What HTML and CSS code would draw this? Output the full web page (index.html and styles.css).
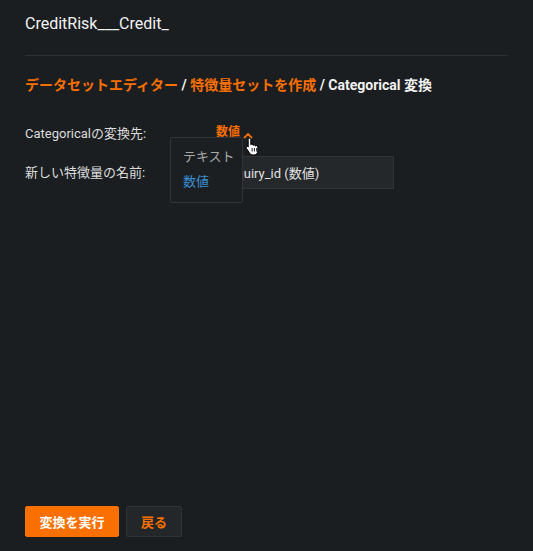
FILE: index.html
```html
<!DOCTYPE html>
<html lang="ja">
<head>
<meta charset="utf-8">
<link rel="stylesheet" href="styles.css">
</head>
<body>
<div class="page">
  <header class="header">
    <h1 class="title">CreditRisk___Credit_</h1>
  </header>
  <nav class="crumbs">
    <span class="crumb-link">データセットエディター</span><span class="sep"> / </span><span class="crumb-link">特徴量セットを作成</span><span class="sep"> / </span><span class="crumb-current">Categorical 変換</span>
  </nav>
  <form class="form">
    <div class="row">
      <label class="label">Categoricalの変換先:</label>
      <div class="field field-select">
        <span class="select-value">数値</span>
        <svg class="caret" width="10" height="7" viewBox="0 0 10 7"><path d="M1 6 L5 2 L9 6" fill="none" stroke="#f96f00" stroke-width="1.8"/></svg>
        <svg class="hand" width="15" height="19" viewBox="0 0 15 19"><path d="M4.5 1.2c.8 0 1.3.6 1.3 1.4v5.2c.3-.5.8-.7 1.3-.6.6.1 1 .6 1 1.2.3-.4.8-.6 1.3-.5.6.1 1 .6 1 1.2.3-.3.8-.5 1.3-.4.7.2 1.1.8 1.1 1.5v3.6c0 2.2-1.6 4.200-3.8 4.2H8c-1.4 0-2.5-.6-3.300-1.7L1.5 11.6c-.5-.7-.3-1.5.3-1.9.6-.4 1.4-.2 1.8.4l-.4-.6V2.6c0-.8.5-1.4 1.3-1.4z" fill="#fff" stroke="#000" stroke-width="1"/><path d="M7.1 11v3.5M9.4 11v3.5M11.7 11v3.5" stroke="#000" stroke-width=".9"/></svg>
        <ul class="menu">
          <li class="menu-item">テキスト</li>
          <li class="menu-item menu-item-active">数値</li>
        </ul>
      </div>
    </div>
    <div class="row">
      <label class="label">新しい特徴量の名前:</label>
      <div class="field">
        <div class="input">inquiry_id (数値)</div>
      </div>
    </div>
  </form>
  <div class="actions">
    <button class="btn btn-primary" type="button">変換を実行</button>
    <button class="btn btn-secondary" type="button">戻る</button>
  </div>
</div>
</body>
</html>
```

FILE: styles.css
```css
* { box-sizing: border-box; }
html, body {
  margin: 0;
  padding: 0;
  background: #1b1e21;
}
body {
  font-family: Roboto, "Noto Sans CJK JP", sans-serif;
  color: #e6e6e6;
}
.page {
  height: 551px;
  padding: 0 25px 14px;
  display: flex;
  flex-direction: column;
}
.header {
  padding-top: 14px;
  padding-bottom: 21px;
  border-bottom: 1px solid #2e3134;
}
.title {
  margin: 0;
  font-size: 16px;
  line-height: 20px;
  font-weight: 400;
  color: #f2f2f2;
}
.crumbs {
  margin-top: 19px;
  font-size: 14px;
  line-height: 20px;
  font-weight: 700;
  color: #f2f2f2;
}
.crumb-link { color: #f96f00; }
.form {
  margin-top: 30px;
  display: flex;
  flex-direction: column;
  gap: 13px;
}
.row {
  display: grid;
  grid-template-columns: 190px 179px;
  align-items: center;
}
.label {
  font-size: 13px;
  line-height: 18px;
  color: #dcdcdc;
}
.field { position: relative; }
.field-select {
  display: flex;
  align-items: center;
  height: 18px;
}
.select-value {
  margin-left: 1px;
  font-size: 12px;
  font-weight: 700;
  color: #f96f00;
  line-height: 14px;
  position: relative;
  top: -2px;
}
.caret {
  margin-left: 3px;
  position: relative;
  top: 1px;
}
.hand {
  position: absolute;
  left: 30px;
  top: 12px;
  z-index: 3;
}
.menu {
  position: absolute;
  left: -45px;
  top: 12px;
  width: 73px;
  height: 66px;
  margin: 0;
  padding: 6px 0 0 12px;
  list-style: none;
  background: #1c1f22;
  border: 1px solid #303337;
  border-radius: 2px;
  z-index: 2;
}
.menu-item {
  font-size: 13px;
  line-height: 25px;
  color: #a9a9a9;
}
.menu-item-active { color: #3a8fd4; }
.input {
  height: 33px;
  padding: 0 10px;
  display: flex;
  align-items: center;
  background: #25282b;
  border: 1px solid #303337;
  font-size: 13px;
  color: #e0e0e0;
  white-space: nowrap;
  overflow: hidden;
}
.actions {
  margin-top: auto;
  display: flex;
  gap: 7px;
}
.btn {
  height: 31px;
  border-radius: 2px;
  font-family: Roboto, "Noto Sans CJK JP", sans-serif;
  font-size: 13px;
  font-weight: 700;
  padding: 0;
  cursor: pointer;
}
.btn-primary {
  width: 94px;
  background: #f96f00;
  border: 1px solid #f96f00;
  color: #fff;
}
.btn-secondary {
  width: 56px;
  background: #24272a;
  border: 1px solid #303337;
  color: #f96f00;
}
```
